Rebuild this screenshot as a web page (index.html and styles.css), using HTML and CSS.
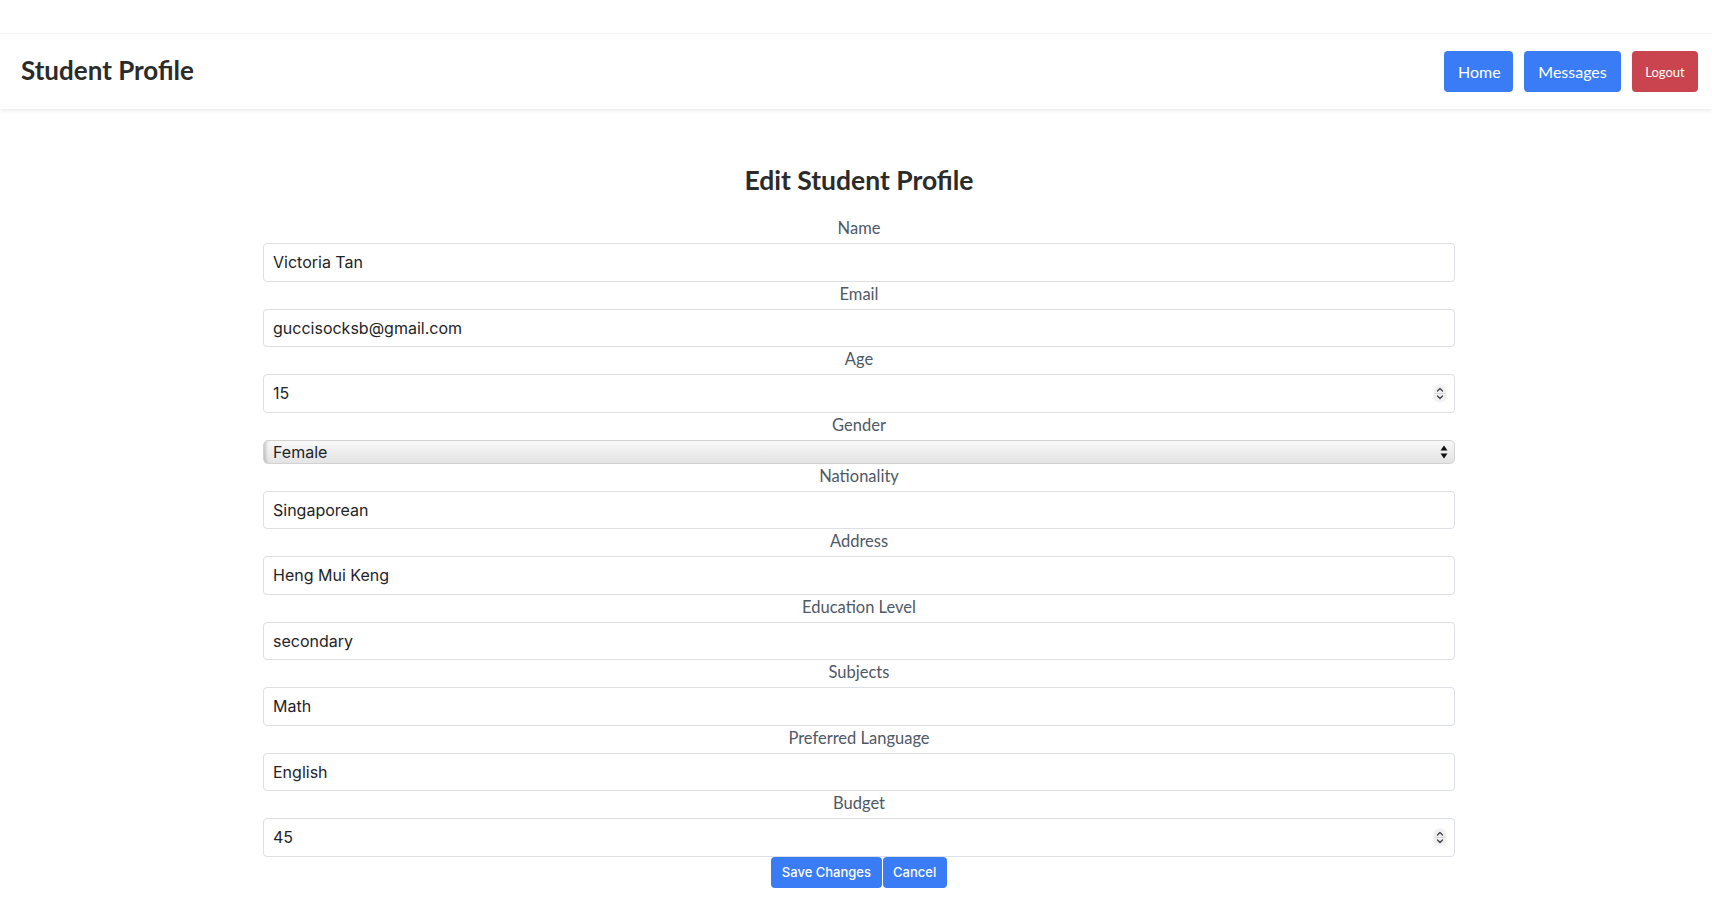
FILE: index.html
```html
<!DOCTYPE html>
<html lang="en">
<head>
<meta charset="utf-8">
<title>Student Profile</title>
<link rel="stylesheet" href="styles.css">
</head>
<body>
<header class="topbar">
  <h1 class="brand">Student Profile</h1>
  <nav class="nav">
    <button class="btn btn-blue">Home</button>
    <button class="btn btn-blue">Messages</button>
    <button class="btn btn-red">Logout</button>
  </nav>
</header>
<main class="main">
  <h2 class="title">Edit Student Profile</h2>
  <form class="form">
    <label class="lbl">Name</label>
    <div class="field"><input class="inp" type="text" value="Victoria Tan"></div>
    <label class="lbl">Email</label>
    <div class="field"><input class="inp" type="text" value="guccisocksb@gmail.com"></div>
    <label class="lbl">Age</label>
    <div class="field">
      <input class="inp" type="text" value="15">
      <svg class="spin" width="14" height="19" viewBox="0 0 14 19"><rect x="0.5" y="0.5" width="13" height="18" rx="6" fill="#f1f1f1"/><line x1="1" y1="9.5" x2="13" y2="9.5" stroke="#d8d8d8" stroke-width="1"/><path d="M4.5 7 L7 4.5 L9.5 7" fill="none" stroke="#444" stroke-width="1.4" stroke-linecap="round" stroke-linejoin="round"/><path d="M4.5 12 L7 14.5 L9.5 12" fill="none" stroke="#444" stroke-width="1.4" stroke-linecap="round" stroke-linejoin="round"/></svg>
    </div>
    <label class="lbl">Gender</label>
    <div class="field">
      <select class="sel"><option>Female</option><option>Male</option></select>
      <svg class="arrows" width="8" height="14" viewBox="0 0 8 14"><path d="M4 0.5 L7.5 5.5 L0.5 5.5 Z" fill="#111"/><path d="M4 13.5 L7.5 8.5 L0.5 8.5 Z" fill="#111"/></svg>
    </div>
    <label class="lbl">Nationality</label>
    <div class="field"><input class="inp" type="text" value="Singaporean"></div>
    <label class="lbl">Address</label>
    <div class="field"><input class="inp" type="text" value="Heng Mui Keng"></div>
    <label class="lbl">Education Level</label>
    <div class="field"><input class="inp" type="text" value="secondary"></div>
    <label class="lbl">Subjects</label>
    <div class="field"><input class="inp" type="text" value="Math"></div>
    <label class="lbl">Preferred Language</label>
    <div class="field"><input class="inp" type="text" value="English"></div>
    <label class="lbl">Budget</label>
    <div class="field">
      <input class="inp" type="text" value="45">
      <svg class="spin" width="14" height="19" viewBox="0 0 14 19"><rect x="0.5" y="0.5" width="13" height="18" rx="6" fill="#f1f1f1"/><line x1="1" y1="9.5" x2="13" y2="9.5" stroke="#d8d8d8" stroke-width="1"/><path d="M4.5 7 L7 4.5 L9.5 7" fill="none" stroke="#444" stroke-width="1.4" stroke-linecap="round" stroke-linejoin="round"/><path d="M4.5 12 L7 14.5 L9.5 12" fill="none" stroke="#444" stroke-width="1.4" stroke-linecap="round" stroke-linejoin="round"/></svg>
    </div>
    <div class="actions">
      <button type="button" class="btn-sm">Save Changes</button>
      <button type="button" class="btn-sm btn-cancel">Cancel</button>
    </div>
  </form>
</main>
</body>
</html>
```

FILE: styles.css
```css
* { box-sizing: border-box; }
html, body { margin: 0; padding: 0; background: #fff; }
body { padding-top: 33px; font-family: "Lato", "Liberation Sans", sans-serif; color: #222; }

.topbar {
  height: 76px;
  border-top: 1px solid #f3f3f3;
  box-shadow: 0 2px 3px rgba(0,0,0,0.08);
  display: flex;
  align-items: center;
  justify-content: space-between;
  padding: 0 14px 0 21px;
}
.brand {
  margin: 0 0 4px;
  font-family: "Lato", sans-serif;
  font-weight: 700;
  font-size: 26px;
  color: #2b2b2b;
}
.nav { display: flex; gap: 11px; }
.btn {
  height: 41px;
  border: none;
  border-radius: 4px;
  color: #fff;
  font-family: "Lato", sans-serif;
  font-size: 16px;
  padding: 0 14px;
  cursor: pointer;
}
.btn-blue { background: #3a7cf5; }
.btn-blue:first-child { width: 69px; }
.btn-blue:nth-child(2) { width: 97px; }
.btn-red { background: #c9444e; font-size: 13px; width: 66px; padding: 0; }

.main { padding: 0 0 0 6px; }
.title {
  margin: 56px 0 20px;
  text-align: center;
  font-family: "Lato", sans-serif;
  font-weight: 700;
  font-size: 26.5px;
  line-height: 31px;
  color: #2b2b2b;
}
.form {
  width: 1192px;
  margin: 0 auto;
  display: flex;
  flex-direction: column;
}
.lbl {
  display: block;
  text-align: center;
  font-family: "Lato", sans-serif;
  font-size: 16.5px;
  line-height: 24px;
  color: #4f5866;
  margin-bottom: 3px;
}
.field { position: relative; }
.inp {
  display: block;
  width: 100%;
  height: 38.5px;
  border: 1px solid #dcdfe3;
  border-radius: 4px;
  padding: 0 9px;
  font-family: "Inter", "Liberation Sans", sans-serif;
  font-size: 16px;
  color: #1f2328;
  background: #fff;
  outline: none;
}
.spin {
  position: absolute;
  right: 8px;
  top: 10px;
}
.sel {
  display: block;
  width: 100%;
  height: 24px;
  -webkit-appearance: none;
  appearance: none;
  border: 1px solid #d2d2d2;
  border-radius: 5px;
  padding: 0 9px;
  font-family: "Inter", "Liberation Sans", sans-serif;
  font-size: 16px;
  color: #1f2328;
  background: linear-gradient(#f9f9f9 0%, #ececec 55%, #e4e4e4 100%);
  box-shadow: inset 4px 0 3px -2px rgba(0,0,0,0.18);
  outline: none;
}
.arrows {
  position: absolute;
  right: 7px;
  top: 5px;
  pointer-events: none;
}
.actions {
  display: flex;
  justify-content: center;
  gap: 1px;
}
.btn-sm {
  height: 31px;
  border: none;
  border-radius: 4px;
  background: #3a7cf5;
  color: #fff;
  font-family: "Inter", "Liberation Sans", sans-serif;
  font-weight: 500;
  font-size: 13px;
  padding: 0 10.5px;
  cursor: pointer;
}
```
